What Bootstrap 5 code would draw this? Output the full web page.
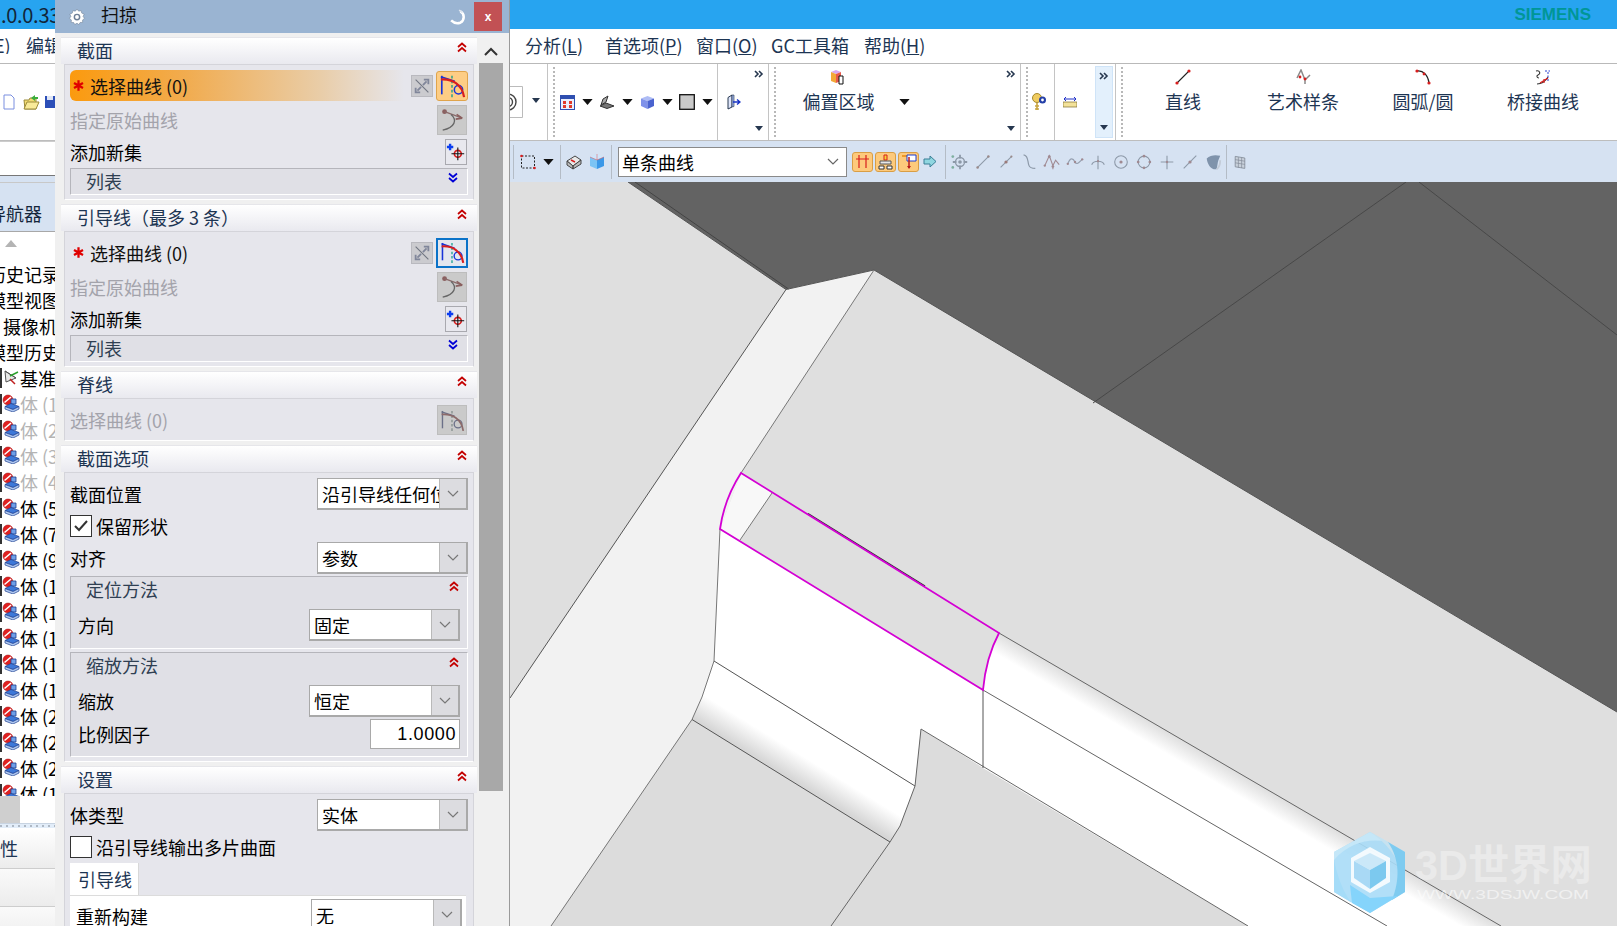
<!DOCTYPE html>
<html lang="zh">
<head>
<meta charset="utf-8">
<title>扫掠</title>
<link href="https://cdn.jsdelivr.net/npm/bootstrap@5.3.0/dist/css/bootstrap.min.css" rel="stylesheet">
<style>
html,body{margin:0;overflow:hidden;background:#fff}
body{font-family:"Noto Sans CJK SC","Noto Sans",sans-serif;font-size:18px;line-height:1;color:#111}
svg{display:block;flex:none}
.defs{position:absolute;width:0;height:0}
.app{width:1617px;height:926px;position:relative;overflow:hidden;background:#fff}
.ttl{height:29px;background:#27a4f0;padding:0 26px 0 1px}
.ttl-v{font-size:20px;color:#12263a;line-height:24px;white-space:nowrap;letter-spacing:-.3px}
.brand{font-family:"Liberation Sans",sans-serif;font-weight:700;font-size:17px;color:#009696}
.mnu{height:35px;border-bottom:1px solid #b9b9b9;color:#1d3553;white-space:nowrap;padding-bottom:2px}
.mnu-l{width:525px;overflow:hidden;color:#1d3553}
.mnu-e{margin-left:-6px;width:32px}
.mi1{width:80px}.mi2{width:91px}.mi3{width:75px}.mi4{width:93px}
.rbn{height:77px;border-bottom:1px solid #bdbdbd;color:#1d3553}
.rc{height:100%}
.rc-line{border-right:1px solid #c4c4c4}
.rc1{width:548px}.rc2{width:170px}.rc3{width:51px}.rc4{width:252px}.rc5{width:34px}.rc6{width:61px}.rc7{width:501px}
.hdl{width:9px;height:100%;position:relative;flex:none}
.hdl-n{margin-right:-2px}
.hdl::after{content:"";position:absolute;top:3px;bottom:3px;left:5px;border-left:2px dotted #b8b8b8}
.sl{width:20px}
.more{width:18px;height:100%;padding:6px 0 8px}
.more-hi{background:#e3f0fc;border:1px solid #cfe4f8;height:72px;padding:5px 0 6px;width:18px}
.rb-btn{width:120px;height:100%;padding-top:5px;font-size:18px}
.rb-lbl{margin-top:7px;white-space:nowrap}
.off-btn{width:71px;height:100%;padding-top:5px}
.tbr{height:41px;background:#d6e2f2}
.tb-lft{width:55px;height:35px;background:#fff;border-bottom:1px solid #777;border-top:1px solid #ccc;margin-top:0;align-self:flex-start}
.sp-fill{width:458px}
.sep{width:1px;height:34px;background:#b4bcc6;flex:none}
.g2{margin-left:2px}.g4{margin-left:4px}.g5{margin-left:5px}.g6{margin-left:6px}.g7{margin-left:7px}.g8{margin-left:8px}.g25{margin-left:25px}
.tcombo{width:229px;height:30px;background:#fff;border:1px solid #8a8a8a;padding:0 7px 0 3px;color:#000}
.obtn{width:21px;height:20px;background:#fdca7c;border:1px solid #d99e45;border-radius:3px}
.sl23{width:23px}
.mn{height:744px}
.lnv{width:55px;overflow:hidden;flex:none;height:744px}
.lnv-h{height:50px;background:#d6e2f2;border-top:1px solid #c8c8c8;border-bottom:1px solid #a8a8a8;padding-top:11px;white-space:nowrap;overflow:hidden}
.lnv-t{margin-left:-12px;color:#14263c}
.lnv-up{height:29px;padding:8px 0 0 5px}
.tree{height:535px;overflow:hidden}
.tr{height:26px;white-space:nowrap;color:#000;line-height:26px}
.tr-a{margin-left:-12px}.tr-b{margin-left:3px}
.tr-i{width:23px;height:20px;border-left:2px solid #333;padding-left:0}
.muted-t{color:#b4b4b4}
.thm{height:27px}
.thm-k{width:20px;height:100%;background:#cfcfcf}
.dots{height:5px;background:#e2edf9;border-top:1px solid #c8d4e2;background-image:radial-gradient(#aeb8c4 1px,transparent 1px);background-size:6px 4px;background-position:10px 0}
.pr-row{height:41px;border-bottom:1px solid #cdcdcd;background:linear-gradient(#fff,#ececec);color:#1d3553}
.pr-row2{height:38px;border-bottom:1px solid #cdcdcd;background:linear-gradient(#fafafa,#ececec)}
.cnv{flex:1;min-width:0;overflow:hidden}
.dlg{position:absolute;left:55px;top:0;width:455px;height:926px;background:#f0f0f0;border-right:1px solid #9a9a9a;overflow:hidden}
.dlg-t{height:33px;background:#9ab4d2;padding:0 7px 0 13px}
.dlg-n{margin-left:15px;color:#111;padding-bottom:5px}
.dlg-x{width:28px;height:29px;background:#c25154;color:#fff;font-family:"Liberation Sans",sans-serif;font-weight:700;font-size:12px}
.dlg-c{height:893px}
.dlg-s{width:416px;margin:4px 0 0 6px;height:889px;overflow:hidden}
.scr{width:24px;margin-left:2px}
.scr-u{height:30px;padding-top:14px}
.scr-k{height:728px;background:#a8a8a8}
.sec{margin-bottom:4px}
.sec-h{height:27px;background:linear-gradient(#fff,#e9e9ef);border-top:1px solid #e6e6ea;padding:0 9px 0 16px;color:#1d3553}
.sec-tx{padding-top:3px;white-space:nowrap}
.sec-b{margin:0 3px;background:#e6e6ec;border:1px solid #d4d4da;border-bottom-color:#fff;padding:5px 5px 4px}
.chv{align-self:flex-start;margin-top:3px}
.rw{height:31px}
.rw2{height:30px;margin-top:4px;color:#a3a3ab}
.rw3{height:26px;margin-top:4px}
.sel{flex:1;height:31px;border-radius:6px 0 0 6px;padding-left:2px;min-width:0;color:#111}
.sel-on{background:linear-gradient(90deg,#fb9a0e 0,#f1ac50 35%,#e9cda8 75%,rgba(230,230,236,0) 100%)}
.star{flex:none;width:13px;height:13px;margin-right:5px}
.bt-s{width:22px;height:22px;background:#cbcbcf;border:1px solid #b9b9bf;margin:0 3px 0 7px}
.bt-b{width:32px;height:30px;background:#fdcd85;border:1px solid #dfa44c;border-radius:3px}
.bt-f{width:32px;height:30px;background:#e3e6ee;border:2px solid #0a72c8}
.bt-d{width:30px;height:30px;background:#cacaca;border:1px solid #bdbdbd;margin-right:1px}
.bt-a{width:22px;height:26px;background:#e8e8ee;border:1px solid #a9a9af;margin-right:1px}
.lst{height:27px;margin-top:3px;background:#e0e0e6;border:1px solid;border-color:#b5b5bb #fff #fff #b5b5bb;padding:0 8px 0 15px;color:#2f3f52}
.lst .chv{margin-top:3px}
.sb3{height:43px;padding:6px 5px 0}
.fr{height:32px}
.fr-u{margin-top:5px}
.cmb{width:151px;height:32px;background:#fff;border:2px solid #a9a9a9;border-left-width:1px;border-top-width:1px;overflow:hidden;padding-left:4px;color:#000}
.cmb-t{flex:1;overflow:hidden;white-space:nowrap;min-width:0}
.cmb-b{width:27px;height:100%;background:#dcdce0;border-left:1px solid #b9b9b9}
.ck{width:22px;height:22px;background:#fff;border:1px solid #333;margin-right:4px;flex:none}
.ckr{height:22px;margin-top:5px}
.grp{background:#e0e0e6;border:1px solid;border-color:#b5b5bb #fff #fff #b5b5bb;padding:0 7px 0 7px;margin-top:2px}
.grp-h{height:32px;color:#2f3f52;padding-left:8px}
.grp-tx{padding-top:3px}
.g-1{height:73px}
.g-2{height:105px;margin-top:3px}
.num{width:90px;height:30px;background:#fff;border:1px solid #a9a9a9;font-family:"Liberation Sans",sans-serif;font-size:18px;letter-spacing:.6px;padding-right:3px;color:#000}
.nr{height:30px;margin-top:2px}
.tabh{width:69px;height:32px;background:#fff;margin-top:5px;color:#1d3553;padding-left:8px;border-right:1px solid #d8d8d8}
.tabb{background:#fff;height:40px;margin-right:2px;padding:3px 4px 0 6px;border-top:1px solid #dcdcdc}
.wm-a{font-family:"Liberation Sans","Noto Sans CJK SC",sans-serif;font-weight:700;font-size:42px;fill:#fff;fill-opacity:.34}
.wm-b{font-family:"Liberation Sans",sans-serif;font-size:13px;fill:#fff;fill-opacity:.55}
</style>
</head>
<body>
<svg class="defs" aria-hidden="true">
<defs>
<symbol id="cu" viewBox="0 0 12 12"><path d="M2 6 6 2.500 10 6M2 10.500 6 7 10 10.500" fill="none" stroke="#c30000" stroke-width="1.700"/></symbol>
<symbol id="cd" viewBox="0 0 12 12"><path d="M2 1.500 6 5 10 1.500M2 6 6 9.500 10 6" fill="none" stroke="#0000d6" stroke-width="1.700"/></symbol>
<symbol id="st" viewBox="0 0 15 15"><path d="M7.500 1.500V13.500M2.300 4.500 12.700 10.500M12.700 4.500 2.300 10.500" stroke="#e00000" stroke-width="2.600"/></symbol>
<symbol id="cv" viewBox="0 0 30 28"><path d="M4 3V23" stroke="#1834d8" stroke-width="1.800" fill="none"/><path d="M3 4 18 9" stroke="#1834d8" stroke-width="1.800"/><path d="M15 3V26" stroke="#0b9c8c" stroke-width="1.400" stroke-dasharray="3 2"/><circle cx="22" cy="18" r="4.500" fill="none" stroke="#1834d8" stroke-width="1.600"/><path d="M3 7C15 6 26 12 28 26" fill="none" stroke="#d81e1e" stroke-width="2.400"/></symbol>
<symbol id="cvd" viewBox="0 0 30 28"><path d="M4 3V23" stroke="#6b7088" stroke-width="1.600" fill="none"/><path d="M3 4 18 9" stroke="#6b7088" stroke-width="1.600"/><path d="M15 3V26" stroke="#7f8a88" stroke-width="1.400" stroke-dasharray="3 2"/><circle cx="22" cy="18" r="4.500" fill="none" stroke="#6b7088" stroke-width="1.500"/><path d="M3 7C15 6 26 12 28 26" fill="none" stroke="#8c6a6a" stroke-width="2"/></symbol>
<symbol id="dx" viewBox="0 0 22 22"><path d="M4 4 18 18" stroke="#6f7480" stroke-width="1.200"/><path d="M12 10 16 6M13 4H18V9M10 12 6 16M4 13V18H9" fill="none" stroke="#80869a" stroke-width="2"/></symbol>
<symbol id="og" viewBox="0 0 28 28"><circle cx="6" cy="5" r="2.600" fill="#8a5f5f"/><path d="M6 5 25 12" stroke="#8a6a6a" stroke-width="1.300"/><path d="M25 12 19 8M25 12 18 13" stroke="#8a5f5f" stroke-width="1.800"/><path d="M13 8C20 14 17 22 4 25" fill="none" stroke="#666" stroke-width="1.400"/></symbol>
<symbol id="ad" viewBox="0 0 22 26"><path d="M4.500 4v7M1 7.500h7" stroke="#0a3cf0" stroke-width="2.600"/><circle cx="13" cy="15" r="3.800" fill="none" stroke="#d81e1e" stroke-width="1.800"/><path d="M13 8v14M6 15h14" stroke="#111" stroke-width="1.200"/></symbol>
<symbol id="tb" viewBox="0 0 18 18"><circle cx="6" cy="6" r="5" fill="#e02020" stroke="#9a1010" stroke-width=".5"/><path d="M2.500 8.500 9 3" stroke="#fff" stroke-width="1.600"/><path d="M9 5H14V10H9z" fill="#6f9fe8" stroke="#1c3f90" stroke-width=".8"/><path d="M3 12.500 9 9.500 17 12.500 11 15.500z" fill="#3d78d8" stroke="#1c3f90" stroke-width=".7"/><path d="M3 12.500V15L11 18 17 15V12.500L11 15.500z" fill="#b0c8f0" stroke="#1c3f90" stroke-width=".7"/></symbol>
<symbol id="tri" viewBox="0 0 12 7"><path d="M0 0H12L6 7z" fill="#111"/></symbol>
<symbol id="tris" viewBox="0 0 10 6"><path d="M1 0H9L5 5z" fill="#26374f"/></symbol>
<symbol id="dbl" viewBox="0 0 10 8"><path d="M1 1 4 4 1 7M5 1 8 4 5 7" fill="none" stroke="#26374f" stroke-width="1.600"/></symbol>
<symbol id="d1" viewBox="0 0 20 20"><circle cx="10" cy="10" r="5" fill="none" stroke="#8d99a8" stroke-width="1.500"/><circle cx="10" cy="10" r="2" fill="#8d99a8"/><path d="M2 10h4M14 10h4M10 2v4M10 14v4" stroke="#8d99a8" stroke-width="2"/><circle cx="2" cy="4" r="1.500" fill="#7fb0a0"/><circle cx="2" cy="16" r="1.500" fill="#7fb0a0"/></symbol>
<symbol id="d2" viewBox="0 0 20 20"><path d="M4 16 16 4" stroke="#8d99a8" stroke-width="1.200"/><circle cx="16" cy="4" r="1.400" fill="#9a8a8a"/><circle cx="4" cy="16" r="1.400" fill="#9a8a8a"/></symbol>
<symbol id="d3" viewBox="0 0 20 20"><path d="M4 16 16 4" stroke="#8d99a8" stroke-width="1.200"/><circle cx="10" cy="10" r="1.800" fill="#9a7a7a"/><circle cx="16" cy="4" r="1.200" fill="#9a8a8a"/></symbol>
<symbol id="d4" viewBox="0 0 20 20"><path d="M4 2C10 3 8 10 10 14 11 17 14 17 17 17" fill="none" stroke="#8d99a8" stroke-width="1.300"/></symbol>
<symbol id="d5" viewBox="0 0 20 20"><path d="M2 14 7 3 11 14 14 8 18 13M11 14l0 4" fill="none" stroke="#a08a92" stroke-width="1.200"/><circle cx="7" cy="4" r="1.500" fill="#a08a92"/><circle cx="11" cy="15" r="1.500" fill="#a08a92"/><circle cx="2" cy="14" r="1.300" fill="#a08a92"/></symbol>
<symbol id="d6" viewBox="0 0 20 20"><path d="M2 12C5 4 8 6 10 10 12 14 15 10 18 7" fill="none" stroke="#96a0b0" stroke-width="1.300"/><circle cx="2" cy="12" r="1.300" fill="#a08a92"/><circle cx="10" cy="10" r="1.300" fill="#a08a92"/><circle cx="18" cy="7" r="1.300" fill="#a08a92"/></symbol>
<symbol id="d7" viewBox="0 0 20 20"><path d="M10 3v15M3 13C5 8 15 8 17 13" fill="none" stroke="#8d99a8" stroke-width="1.200"/><circle cx="10" cy="9" r="1.300" fill="#a08a92"/></symbol>
<symbol id="d8" viewBox="0 0 20 20"><circle cx="10" cy="10" r="7" fill="none" stroke="#8d99a8" stroke-width="1.200"/><circle cx="10" cy="10" r="1.800" fill="#a08a92"/></symbol>
<symbol id="d9" viewBox="0 0 20 20"><circle cx="10" cy="10" r="6.500" fill="none" stroke="#8d99a8" stroke-width="1.200"/><circle cx="10" cy="3.500" r="1.500" fill="#a08a92"/><circle cx="10" cy="16.500" r="1.500" fill="#a08a92"/><circle cx="3.500" cy="10" r="1.500" fill="#a08a92"/><circle cx="16.500" cy="10" r="1.500" fill="#a08a92"/></symbol>
<symbol id="d10" viewBox="0 0 20 20"><path d="M10 3v15M3 10h14" stroke="#8d99a8" stroke-width="1.200"/><circle cx="10" cy="10" r="1.300" fill="#a08a92"/></symbol>
<symbol id="d11" viewBox="0 0 20 20"><path d="M3 17 17 3" stroke="#8d99a8" stroke-width="1.200"/><circle cx="10" cy="10" r="1.800" fill="#a08a92"/></symbol>
<symbol id="d12" viewBox="0 0 20 20"><path d="M3 6C7 2 13 2 18 3L16 8C15 11 15 14 14 18 8 19 4 13 3 6z" fill="#7f93ab"/><path d="M14 18C17 16 18 12 18 8" fill="none" stroke="#c3ccd8" stroke-width="2"/></symbol>
<symbol id="d13" viewBox="0 0 20 20"><path d="M4 3 16 5V18L4 16z" fill="#c8d0da" stroke="#7f8894"/><path d="M4 7 16 9M4 11 16 13M8 4V17M12 4.500V17.500" stroke="#7f8894" stroke-width=".8"/></symbol>
</defs>
</svg>

<div class="app d-flex flex-column">
  <div class="ttl d-flex align-items-center justify-content-between">
    <span class="ttl-v">.0.0.33</span>
    <span class="brand">SIEMENS</span>
  </div>

  <div class="mnu d-flex align-items-center">
    <div class="mnu-l d-flex"><span class="mnu-e">E)</span><span>编辑</span></div>
    <span class="mi1">分析(<u>L</u>)</span>
    <span class="mi2">首选项(<u>P</u>)</span>
    <span class="mi3">窗口(<u>O</u>)</span>
    <span class="mi4">GC工具箱</span>
    <span>帮助(<u>H</u>)</span>
  </div>

  <div class="rbn d-flex">
    <div class="rc rc1 rc-line d-flex align-items-center">
      <svg width="14" height="16" viewBox="0 0 14 16" class="g2"><path d="M2 1H9L12 4V15H2z" fill="#fff" stroke="#7b8fe0"/></svg>
      <svg width="17" height="17" viewBox="0 0 17 17" class="g7"><path d="M1 6H6L7 4H13V15H2z" fill="#f3dc72" stroke="#9b8a3a"/><path d="M1 15 4 8H16L13 15z" fill="#f9ea99" stroke="#9b8a3a"/><path d="M8 4 12 1V3H15V5H12V7z" fill="#3cae3c"/></svg>
      <svg width="12" height="14" viewBox="0 0 12 14" class="g4"><path d="M1 1H12V13H1z" fill="#2c4fb8"/><path d="M3 1H9V5H3z" fill="#dfe6f5"/></svg>
      <div class="ms-auto d-flex align-items-center">
        <svg width="20" height="32" viewBox="0 0 20 32"><path d="M0 .5H19.500V31.500H0" fill="#fff" stroke="#bbb"/><circle cx="5" cy="16" r="8" fill="none" stroke="#444" stroke-width="1.400"/><circle cx="5" cy="16" r="4.500" fill="none" stroke="#444" stroke-width="1.400"/></svg>
        <div class="more d-flex flex-column justify-content-end align-items-center g4"><svg width="10" height="6"><use href="#tris"/></svg></div>
        <div class="g2"></div>
      </div>
    </div>
    <div class="rc rc2 rc-line d-flex align-items-center">
      <div class="hdl"></div>
      <div class="sl d-flex justify-content-center"><svg width="15" height="15" viewBox="0 0 15 15"><rect x=".5" y=".5" width="14" height="14" fill="#e9eefc" stroke="#2f4fb0"/><path d="M1 1h13v3H1z" fill="#2f4fb0"/><path d="M3 6h3v3H3zM9 6h3v3H9zM3 10h3v3H3zM9 10h3v3H9z" fill="#e03a2a"/></svg></div>
      <div class="sl d-flex justify-content-center"><svg width="11" height="6"><use href="#tri"/></svg></div>
      <div class="sl d-flex justify-content-center"><svg width="16" height="14" viewBox="0 0 16 14"><path d="M1 11 7 8 15 11 8 13.500z" fill="#777" stroke="#333"/><path d="M2 10 4 4 9 1 7 7z" fill="#aaa" stroke="#333"/></svg></div>
      <div class="sl d-flex justify-content-center"><svg width="11" height="6"><use href="#tri"/></svg></div>
      <div class="sl d-flex justify-content-center"><svg width="15" height="15" viewBox="0 0 15 15"><path d="M1 3.500 7.500 1 14 3.500 7.500 6z" fill="#aebcf5"/><path d="M1 3.500V11L7.500 14V6z" fill="#7f92ea"/><path d="M14 3.500V11L7.500 14V6z" fill="#4a63cf"/></svg></div>
      <div class="sl d-flex justify-content-center"><svg width="11" height="6"><use href="#tri"/></svg></div>
      <div class="sl d-flex justify-content-center"><svg width="16" height="16" viewBox="0 0 16 16"><rect x=".7" y=".7" width="14.600" height="14.600" fill="#c9c9c9" stroke="#111" stroke-width="1.300"/></svg></div>
      <div class="sl d-flex justify-content-center"><svg width="11" height="6"><use href="#tri"/></svg></div>
    </div>
    <div class="rc rc3 rc-line d-flex align-items-center">
      <div class="d-flex justify-content-center flex-fill"><svg width="14" height="16" viewBox="0 0 14 16"><path d="M1 3.500 5 1V13L1 15z" fill="#dfe6fb" stroke="#26374f"/><path d="M5 1H7V12.500L5 13z" fill="#9fb3ea" stroke="#26374f" stroke-width=".6"/><path d="M6 8H12M10 5.500 13 8 10 10.500" fill="none" stroke="#1934c8" stroke-width="1.400"/></svg></div>
      <div class="more d-flex flex-column justify-content-between align-items-center"><svg width="10" height="8"><use href="#dbl"/></svg><svg width="10" height="6"><use href="#tris"/></svg></div>
    </div>
    <div class="rc rc4 rc-line d-flex align-items-center">
      <div class="hdl"></div>
      <div class="off-btn g25 d-flex flex-column align-items-center">
        <svg width="17" height="16" viewBox="0 0 17 16"><path d="M1 3 6 1 11 3 6 5z" fill="#d8a8f0"/><path d="M1 3V12L6 14V5z" fill="#f3a838"/><path d="M11 3V12L6 14V5z" fill="#e8584a"/><path d="M9 7H13V15H9z" fill="#fff" stroke="#111"/></svg>
        <span class="rb-lbl">偏置区域</span>
      </div>
      <div class="g25"><svg width="11" height="6"><use href="#tri"/></svg></div>
      <div class="more ms-auto d-flex flex-column justify-content-between align-items-center"><svg width="10" height="8"><use href="#dbl"/></svg><svg width="10" height="6"><use href="#tris"/></svg></div>
    </div>
    <div class="rc rc5 rc-line d-flex align-items-center">
      <div class="hdl"></div>
      <svg width="17" height="18" viewBox="0 0 17 18"><circle cx="7" cy="5" r="4.500" fill="#f0cc60" stroke="#a68a30"/><path d="M7 10V17M5 13H9M5 16H9" stroke="#c8a440" stroke-width="1.600"/><circle cx="12.500" cy="7" r="3.500" fill="#243fa8"/><circle cx="12.500" cy="7" r="1.400" fill="#fff"/></svg>
    </div>
    <div class="rc rc6 rc-line d-flex align-items-center">
      <svg width="14" height="12" viewBox="0 0 14 12" class="g8"><path d="M1 3H13M3 1 1 3 3 5M11 1 13 3 11 5" fill="none" stroke="#1e2fc8"/><rect x="0" y="6" width="14" height="5" fill="#f3e29a" stroke="#7c6a2c" stroke-width=".7"/></svg>
      <div class="ms-auto d-flex align-items-center"><div class="more-hi d-flex flex-column justify-content-between align-items-center"><svg width="10" height="8"><use href="#dbl"/></svg><svg width="10" height="6"><use href="#tris"/></svg></div><div class="g2"></div></div>
    </div>
    <div class="rc rc7 d-flex align-items-center">
      <div class="hdl hdl-n"></div>
      <div class="rb-btn d-flex flex-column align-items-center">
        <svg width="16" height="16" viewBox="0 0 16 16"><path d="M2 14 14 2" stroke="#222" stroke-width="1.100"/><circle cx="2" cy="14" r="1.600" fill="#d81e1e"/><circle cx="14" cy="2" r="1.600" fill="#d81e1e"/></svg>
        <span class="rb-lbl">直线</span>
      </div>
      <div class="rb-btn d-flex flex-column align-items-center">
        <svg width="16" height="16" viewBox="0 0 16 16"><path d="M2 9 6 1 10 11 15 6M10 11l0 4" fill="none" stroke="#8a8a8a" stroke-width="1.500"/><circle cx="5" cy="8" r="1.400" fill="#d81e1e"/><circle cx="10" cy="10" r="1.400" fill="#d81e1e"/></svg>
        <span class="rb-lbl">艺术样条</span>
      </div>
      <div class="rb-btn d-flex flex-column align-items-center">
        <svg width="16" height="16" viewBox="0 0 16 16"><path d="M2 2C8 1 13 6 14 14" fill="none" stroke="#222" stroke-width="1.400"/><circle cx="2" cy="2" r="1.600" fill="#d81e1e"/><circle cx="9" cy="5" r="1.400" fill="#d81e1e"/><circle cx="14" cy="14" r="1.600" fill="#d81e1e"/></svg>
        <span class="rb-lbl">圆弧/圆</span>
      </div>
      <div class="rb-btn d-flex flex-column align-items-center">
        <svg width="16" height="16" viewBox="0 0 16 16"><path d="M1 2C5 1 6 5 3 6 1 7 2 9 4 9M2 15C6 15 10 13 13 8" fill="none" stroke="#333" stroke-width="1.100"/><path d="M10 2H15M13 3V13" stroke="#2a3fd0" stroke-width="1" stroke-dasharray="2 1.500"/><path d="M5 14 13 9M9 10v4" stroke="#d81e1e" stroke-width="1.200"/></svg>
        <span class="rb-lbl">桥接曲线</span>
      </div>
    </div>
  </div>

  <div class="tbr d-flex align-items-center">
    <div class="tb-lft"></div>
    <div class="sp-fill"></div>
    <div class="sep"></div>
    <svg width="16" height="16" viewBox="0 0 16 16" class="g6"><rect x="1.500" y="2" width="13" height="12" fill="none" stroke="#222" stroke-dasharray="2 1.500"/><circle cx="1.500" cy="2" r="1.300" fill="#d81e1e"/><circle cx="14.500" cy="14" r="1.300" fill="#d81e1e"/></svg>
    <svg width="11" height="6" class="g7"><use href="#tri"/></svg>
    <div class="sep g6"></div>
    <svg width="16" height="16" viewBox="0 0 16 16" class="g5"><path d="M1 7 9 2 15 6 7 12z" fill="#e8e8e8" stroke="#444"/><path d="M1 7V11L7 15V12zM15 6V10L7 15V12z" fill="#bbb" stroke="#444"/><path d="M5 6 9 8" stroke="#d81e1e" stroke-width="1.500"/></svg>
    <svg width="16" height="17" viewBox="0 0 16 17" class="g7"><path d="M1 4 8 1 15 4 8 7z" fill="#cfe6fb"/><path d="M1 4V13L8 16V7z" fill="#7cc4f5"/><path d="M15 4V13L8 16V7z" fill="#3b98e8"/><path d="M8 1V7M1 4 8 7 15 4" stroke="#e05050" stroke-width=".5" fill="none"/></svg>
    <div class="sep g6"></div>
    <div class="tcombo g6 d-flex align-items-center justify-content-between">
      <span>单条曲线</span>
      <svg width="12" height="7" viewBox="0 0 12 7"><path d="M1 1 6 6 11 1" fill="none" stroke="#666" stroke-width="1.200"/></svg>
    </div>
    <div class="obtn g5 d-flex align-items-center justify-content-center"><svg width="15" height="15" viewBox="0 0 15 15"><path d="M4 1V14M11 1V14M1 5H14" stroke="#d81e1e" stroke-width="1.200"/></svg></div>
    <div class="obtn g2 d-flex align-items-center justify-content-center"><svg width="15" height="16" viewBox="0 0 15 16"><path d="M6 1H9V6H6z" fill="#f5d430" stroke="#d81e1e"/><path d="M2 7H13V10H2z" fill="#e8e8e8" stroke="#555"/><path d="M1 12H6V15H1zM9 12H14V15H9z" fill="#fff" stroke="#333"/></svg></div>
    <div class="obtn g2 d-flex align-items-center justify-content-center"><svg width="16" height="16" viewBox="0 0 16 16"><path d="M1 2H8" stroke="#e88a10" stroke-width="1.500"/><path d="M6 1H15V7H6z" fill="#fff" stroke="#1c3fd0"/><path d="M8 3V14" stroke="#b81e1e" stroke-width="1.500"/><path d="M6 12 8 15 10 12z" fill="#b81e1e"/></svg></div>
    <svg width="14" height="13" viewBox="0 0 14 13" class="g4"><path d="M1 4H7V1L13 6.500 7 12V9H1z" fill="#8fd6e0" stroke="#3a7f96"/></svg>
    <div class="sep g8"></div>
    <div class="g2 d-flex">
      <div class="sl23 d-flex justify-content-center"><svg width="18" height="18"><use href="#d1"/></svg></div>
      <div class="sl23 d-flex justify-content-center"><svg width="18" height="18"><use href="#d2"/></svg></div>
      <div class="sl23 d-flex justify-content-center"><svg width="18" height="18"><use href="#d3"/></svg></div>
      <div class="sl23 d-flex justify-content-center"><svg width="18" height="18"><use href="#d4"/></svg></div>
      <div class="sl23 d-flex justify-content-center"><svg width="18" height="18"><use href="#d5"/></svg></div>
      <div class="sl23 d-flex justify-content-center"><svg width="18" height="18"><use href="#d6"/></svg></div>
      <div class="sl23 d-flex justify-content-center"><svg width="18" height="18"><use href="#d7"/></svg></div>
      <div class="sl23 d-flex justify-content-center"><svg width="18" height="18"><use href="#d8"/></svg></div>
      <div class="sl23 d-flex justify-content-center"><svg width="18" height="18"><use href="#d9"/></svg></div>
      <div class="sl23 d-flex justify-content-center"><svg width="18" height="18"><use href="#d10"/></svg></div>
      <div class="sl23 d-flex justify-content-center"><svg width="18" height="18"><use href="#d11"/></svg></div>
      <div class="sl23 d-flex justify-content-center"><svg width="18" height="18"><use href="#d12"/></svg></div>
    </div>
    <div class="sep g2"></div>
    <svg width="16" height="16" class="g5"><use href="#d13"/></svg>
  </div>

  <div class="mn d-flex">
    <aside class="lnv">
      <div class="lnv-h d-flex align-items-center"><span class="lnv-t">导航器</span></div>
      <div class="lnv-up"><svg width="12" height="7" viewBox="0 0 12 7"><path d="M6 0 12 7H0z" fill="#b4b4b4"/></svg></div>
      <div class="tree">
        <div class="tr"><span class="tr-a d-inline-block">历史记录</span></div>
        <div class="tr"><span class="tr-a d-inline-block">模型视图</span></div>
        <div class="tr"><span class="tr-b d-inline-block">摄像机</span></div>
        <div class="tr"><span class="tr-a d-inline-block">模型历史</span></div>
        <div class="tr d-flex align-items-center"><div class="tr-i"><svg width="18" height="18" viewBox="0 0 18 18"><path d="M3 3 4 14 14 10z" fill="#e8e8e8" stroke="#555"/><path d="M3 3 14 10" stroke="#555"/><path d="M8 8 16 4" stroke="#2aa02a" stroke-width="1.500"/><path d="M8 11 13 16" stroke="#c02020" stroke-width="1.500"/></svg></div><span>基准</span></div>
        <div class="tr d-flex align-items-center"><div class="tr-i"><svg width="18" height="18"><use href="#tb"/></svg></div><span class="muted-t">体 (1</span></div>
        <div class="tr d-flex align-items-center"><div class="tr-i"><svg width="18" height="18"><use href="#tb"/></svg></div><span class="muted-t">体 (2</span></div>
        <div class="tr d-flex align-items-center"><div class="tr-i"><svg width="18" height="18"><use href="#tb"/></svg></div><span class="muted-t">体 (3</span></div>
        <div class="tr d-flex align-items-center"><div class="tr-i"><svg width="18" height="18"><use href="#tb"/></svg></div><span class="muted-t">体 (4</span></div>
        <div class="tr d-flex align-items-center"><div class="tr-i"><svg width="18" height="18"><use href="#tb"/></svg></div><span>体 (5</span></div>
        <div class="tr d-flex align-items-center"><div class="tr-i"><svg width="18" height="18"><use href="#tb"/></svg></div><span>体 (7</span></div>
        <div class="tr d-flex align-items-center"><div class="tr-i"><svg width="18" height="18"><use href="#tb"/></svg></div><span>体 (9</span></div>
        <div class="tr d-flex align-items-center"><div class="tr-i"><svg width="18" height="18"><use href="#tb"/></svg></div><span>体 (1</span></div>
        <div class="tr d-flex align-items-center"><div class="tr-i"><svg width="18" height="18"><use href="#tb"/></svg></div><span>体 (1</span></div>
        <div class="tr d-flex align-items-center"><div class="tr-i"><svg width="18" height="18"><use href="#tb"/></svg></div><span>体 (1</span></div>
        <div class="tr d-flex align-items-center"><div class="tr-i"><svg width="18" height="18"><use href="#tb"/></svg></div><span>体 (1</span></div>
        <div class="tr d-flex align-items-center"><div class="tr-i"><svg width="18" height="18"><use href="#tb"/></svg></div><span>体 (1</span></div>
        <div class="tr d-flex align-items-center"><div class="tr-i"><svg width="18" height="18"><use href="#tb"/></svg></div><span>体 (2</span></div>
        <div class="tr d-flex align-items-center"><div class="tr-i"><svg width="18" height="18"><use href="#tb"/></svg></div><span>体 (2</span></div>
        <div class="tr d-flex align-items-center"><div class="tr-i"><svg width="18" height="18"><use href="#tb"/></svg></div><span>体 (2</span></div>
        <div class="tr d-flex align-items-center"><div class="tr-i"><svg width="18" height="18"><use href="#tb"/></svg></div><span>体 (1</span></div>
      </div>
      <div class="thm"><div class="thm-k"></div></div>
      <div class="dots"></div>
      <div class="pr-row d-flex align-items-center"><span>性</span></div>
      <div class="pr-row2"></div>
      <div class="pr-row2"></div>
    </aside>

    <div class="cnv">
      <svg width="1562" height="744" viewBox="55 182 1562 744">
        <defs>
          <linearGradient id="fa" gradientUnits="userSpaceOnUse" x1="983" y1="690" x2="1012" y2="640.500"><stop offset=".66" stop-color="#fff"/><stop offset="1" stop-color="#dfdfdf"/></linearGradient>
          <linearGradient id="fb" gradientUnits="userSpaceOnUse" x1="714" y1="661" x2="682.800" y2="711.800"><stop offset=".58" stop-color="#fff"/><stop offset="1" stop-color="#d6d6d6"/></linearGradient>
        </defs>
        <rect x="55" y="182" width="1562" height="744" fill="#dfdfdf"/>
        <polygon points="628,182 786,289.500 874,270 1617,712 1617,182" fill="#636363"/>
        <polygon points="786,289.500 874,270 741,473 720,529 714,661 702,697 692,719.500 551,926 510,926 510,698" fill="#f2f2f2"/>
        <polygon points="741,473 772,493 740,540 720,529" fill="#f8f8f8"/>
        <polygon points="720,529 983,690 983,768 921,729 915,786 714,661" fill="#fff"/>
        <polygon points="714,661 915,786 900,826 890,842 692,719.500 702,697" fill="url(#fb)"/>
        <polygon points="692,719.500 890,842 831,926 551,926" fill="#dcdcdc"/>
        <polygon points="921,729 983,768 1248,926 831,926 890,842 900,826 915,786" fill="#dcdcdc"/>
        <polygon points="983,690 1387,926 1248,926 983,768" fill="#fff"/>
        <polygon points="999,633 1501,926 1387,926 983,690 988,660" fill="url(#fa)"/>
        <g fill="none" stroke="#555" stroke-width="1">
          <path d="M628 182 786 289.500 510 698"/>
          <path d="M635 182 788.500 289" stroke="#444"/>
          <path d="M786 289.500 874 270 1617 712"/>
          <path d="M874 270 741 473" stroke="#777"/>
          <path d="M1093 403 1406 182M1419 182 1617 335" stroke="#484848"/>
          <path d="M720 529 714 661 702 697 692 719.500 551 926" stroke="#777"/>
          <path d="M772 493 740 540" stroke="#777"/>
          <path d="M714 661 915 786"/>
          <path d="M692 719.500 890 842"/>
          <path d="M921 729 915 786 900 826 890 842 831 926" stroke="#666"/>
          <path d="M921 729 1248 926" stroke="#666"/>
          <path d="M983 690V768" stroke="#555"/>
          <path d="M983 690 1387 926" stroke="#666"/>
          <path d="M999 633 1501 926" stroke="#666"/>
          <path d="M808 513.500 925 586" stroke="#333" stroke-width="1.400"/>
        </g>
        <g fill="none" stroke="#d400d4" stroke-width="1.800">
          <path d="M741 473 999 633C990 650 985 668 983 690L720 529C723 508 730 490 741 473z"/>
        </g>
        <g>
          <path d="M1370 832 1405 852V892L1370 913 1334 892V852z" fill="#a9dcf7" fill-opacity=".9"/>
          <path d="M1334 852 1370 832 1388 842C1370 838 1350 842 1334 860z" fill="#c5e7f8"/>
          <path d="M1370 832 1405 852V878C1398 860 1390 845 1370 832z" fill="#c6e2f0"/>
          <path d="M1388 842 1405 852V892L1392 900C1400 880 1400 860 1388 842z" fill="#7ecbf0"/>
          <path d="M1350 885 1370 898 1398 896 1370 913 1352 903z" fill="#85d4fb"/>
          <path d="M1334 860C1338 880 1345 895 1352 903L1334 892z" fill="#a5dcf8"/>
          <path d="M1370 847 1390 858V882L1370 893 1351 882V858z" fill="#fff" fill-opacity=".85"/>
          <path d="M1370 853 1386 861 1370 870 1354 861z" fill="#cbe8f8"/>
          <path d="M1354 861V878L1370 889V870z" fill="#a9d9f5"/>
          <path d="M1386 861V878L1370 889V870z" fill="#7cc9ef"/>
          <text class="wm-a" x="1415" y="880" textLength="177" lengthAdjust="spacingAndGlyphs">3D世界网</text>
          <text class="wm-b" x="1417" y="899" textLength="172" lengthAdjust="spacingAndGlyphs">WWW.3DSJW.COM</text>
        </g>
      </svg>
    </div>
  </div>

  <section class="dlg">
    <div class="dlg-t d-flex align-items-center">
      <svg width="18" height="18" viewBox="0 0 16 16"><path d="M8 1 9.500 2.800 11.700 2.300 12.200 4.500 14.400 5.500 13.400 7.500 14.700 9.200 13 10.600 13 12.800 10.800 12.900 9.500 14.700 8 13.500 6 14.700 5 12.900 2.800 12.800 3 10.600 1.300 9.200 2.600 7.500 1.600 5.500 3.800 4.500 4.300 2.300 6.500 2.800z" fill="#fff" stroke="#6d7e96" stroke-width=".5"/><circle cx="8" cy="8" r="3" fill="#6d7e96"/><circle cx="8" cy="8" r="1.700" fill="#fff"/></svg>
      <span class="dlg-n">扫掠</span>
      <svg class="ms-auto" width="16" height="16" viewBox="0 0 14 14"><path d="M9 2C13 4 13 10 9 12 6 13 3 12 1 10" fill="none" stroke="#fff" stroke-width="2.200"/><path d="M8 1 11 3" stroke="#dfe6f0" stroke-width="1.500"/></svg>
      <div class="dlg-x d-flex align-items-center justify-content-center ms-2 me-0">x</div>
    </div>
    <div class="dlg-c d-flex">
      <div class="dlg-s">
        <div class="sec">
          <div class="sec-h d-flex justify-content-between"><span class="sec-tx">截面</span><svg class="chv" width="12" height="12"><use href="#cu"/></svg></div>
          <div class="sec-b">
            <div class="rw d-flex align-items-center">
              <div class="sel sel-on d-flex align-items-center"><svg class="star" width="13" height="13"><use href="#st"/></svg><span>选择曲线 (0)</span></div>
              <div class="bt-s d-flex align-items-center justify-content-center"><svg width="20" height="20"><use href="#dx"/></svg></div>
              <div class="bt-b d-flex align-items-center justify-content-center"><svg width="28" height="26"><use href="#cv"/></svg></div>
            </div>
            <div class="rw2 d-flex align-items-center justify-content-between"><span>指定原始曲线</span><div class="bt-d d-flex align-items-center justify-content-center"><svg width="26" height="26"><use href="#og"/></svg></div></div>
            <div class="rw3 d-flex align-items-center justify-content-between"><span class="text-black">添加新集</span><div class="bt-a d-flex align-items-center justify-content-center"><svg width="20" height="24"><use href="#ad"/></svg></div></div>
            <div class="lst d-flex justify-content-between"><span class="sec-tx">列表</span><svg class="chv" width="12" height="12"><use href="#cd"/></svg></div>
          </div>
        </div>
        <div class="sec">
          <div class="sec-h d-flex justify-content-between"><span class="sec-tx">引导线（最多 3 条）</span><svg class="chv" width="12" height="12"><use href="#cu"/></svg></div>
          <div class="sec-b">
            <div class="rw d-flex align-items-center">
              <div class="sel d-flex align-items-center"><svg class="star" width="13" height="13"><use href="#st"/></svg><span>选择曲线 (0)</span></div>
              <div class="bt-s d-flex align-items-center justify-content-center"><svg width="20" height="20"><use href="#dx"/></svg></div>
              <div class="bt-f d-flex align-items-center justify-content-center"><svg width="26" height="25"><use href="#cv"/></svg></div>
            </div>
            <div class="rw2 d-flex align-items-center justify-content-between"><span>指定原始曲线</span><div class="bt-d d-flex align-items-center justify-content-center"><svg width="26" height="26"><use href="#og"/></svg></div></div>
            <div class="rw3 d-flex align-items-center justify-content-between"><span class="text-black">添加新集</span><div class="bt-a d-flex align-items-center justify-content-center"><svg width="20" height="24"><use href="#ad"/></svg></div></div>
            <div class="lst d-flex justify-content-between"><span class="sec-tx">列表</span><svg class="chv" width="12" height="12"><use href="#cd"/></svg></div>
          </div>
        </div>
        <div class="sec">
          <div class="sec-h d-flex justify-content-between"><span class="sec-tx">脊线</span><svg class="chv" width="12" height="12"><use href="#cu"/></svg></div>
          <div class="sec-b sb3">
            <div class="rw2 mt-0 d-flex align-items-center justify-content-between"><span>选择曲线 (0)</span><div class="bt-d d-flex align-items-center justify-content-center"><svg width="26" height="25"><use href="#cvd"/></svg></div></div>
          </div>
        </div>
        <div class="sec">
          <div class="sec-h d-flex justify-content-between"><span class="sec-tx">截面选项</span><svg class="chv" width="12" height="12"><use href="#cu"/></svg></div>
          <div class="sec-b">
            <div class="fr d-flex align-items-center justify-content-between"><span class="text-black">截面位置</span>
              <div class="cmb d-flex align-items-center"><span class="cmb-t">沿引导线任何位置</span><div class="cmb-b d-flex align-items-center justify-content-center"><svg width="12" height="7" viewBox="0 0 12 7"><path d="M1 1 6 6 11 1" fill="none" stroke="#777" stroke-width="1.200"/></svg></div></div></div>
            <div class="ckr d-flex align-items-center"><div class="ck d-flex align-items-center justify-content-center"><svg width="16" height="14" viewBox="0 0 16 14"><path d="M2 7 6 11 14 2" fill="none" stroke="#333" stroke-width="2"/></svg></div><span class="text-black">保留形状</span></div>
            <div class="fr fr-u d-flex align-items-center justify-content-between"><span class="text-black">对齐</span>
              <div class="cmb d-flex align-items-center"><span class="cmb-t">参数</span><div class="cmb-b d-flex align-items-center justify-content-center"><svg width="12" height="7" viewBox="0 0 12 7"><path d="M1 1 6 6 11 1" fill="none" stroke="#777" stroke-width="1.200"/></svg></div></div></div>
            <div class="grp g-1">
              <div class="grp-h d-flex justify-content-between"><span class="grp-tx">定位方法</span><svg class="chv" width="12" height="12"><use href="#cu"/></svg></div>
              <div class="fr d-flex align-items-center justify-content-between"><span class="text-black">方向</span>
                <div class="cmb d-flex align-items-center"><span class="cmb-t">固定</span><div class="cmb-b d-flex align-items-center justify-content-center"><svg width="12" height="7" viewBox="0 0 12 7"><path d="M1 1 6 6 11 1" fill="none" stroke="#777" stroke-width="1.200"/></svg></div></div></div>
            </div>
            <div class="grp g-2">
              <div class="grp-h d-flex justify-content-between"><span class="grp-tx">缩放方法</span><svg class="chv" width="12" height="12"><use href="#cu"/></svg></div>
              <div class="fr d-flex align-items-center justify-content-between"><span class="text-black">缩放</span>
                <div class="cmb d-flex align-items-center"><span class="cmb-t">恒定</span><div class="cmb-b d-flex align-items-center justify-content-center"><svg width="12" height="7" viewBox="0 0 12 7"><path d="M1 1 6 6 11 1" fill="none" stroke="#777" stroke-width="1.200"/></svg></div></div></div>
              <div class="nr d-flex align-items-center justify-content-between"><span class="text-black">比例因子</span><div class="num d-flex align-items-center justify-content-end">1.0000</div></div>
            </div>
          </div>
        </div>
        <div class="sec">
          <div class="sec-h d-flex justify-content-between"><span class="sec-tx">设置</span><svg class="chv" width="12" height="12"><use href="#cu"/></svg></div>
          <div class="sec-b">
            <div class="fr d-flex align-items-center justify-content-between"><span class="text-black">体类型</span>
              <div class="cmb d-flex align-items-center"><span class="cmb-t">实体</span><div class="cmb-b d-flex align-items-center justify-content-center"><svg width="12" height="7" viewBox="0 0 12 7"><path d="M1 1 6 6 11 1" fill="none" stroke="#777" stroke-width="1.200"/></svg></div></div></div>
            <div class="ckr d-flex align-items-center"><div class="ck"></div><span class="text-black">沿引导线输出多片曲面</span></div>
            <div class="tabh d-flex align-items-center"><span>引导线</span></div>
            <div class="tabb d-flex align-items-start justify-content-between"><span class="text-black pt-2">重新构建</span>
              <div class="cmb d-flex align-items-center"><span class="cmb-t">无</span><div class="cmb-b d-flex align-items-center justify-content-center"><svg width="12" height="7" viewBox="0 0 12 7"><path d="M1 1 6 6 11 1" fill="none" stroke="#777" stroke-width="1.200"/></svg></div></div></div>
          </div>
        </div>
      </div>
      <div class="scr">
        <div class="scr-u d-flex justify-content-center"><svg width="14" height="9" viewBox="0 0 14 9"><path d="M1 8 7 2 13 8" fill="none" stroke="#333" stroke-width="2"/></svg></div>
        <div class="scr-k"></div>
      </div>
    </div>
  </section>
</div>
</body>
</html>
